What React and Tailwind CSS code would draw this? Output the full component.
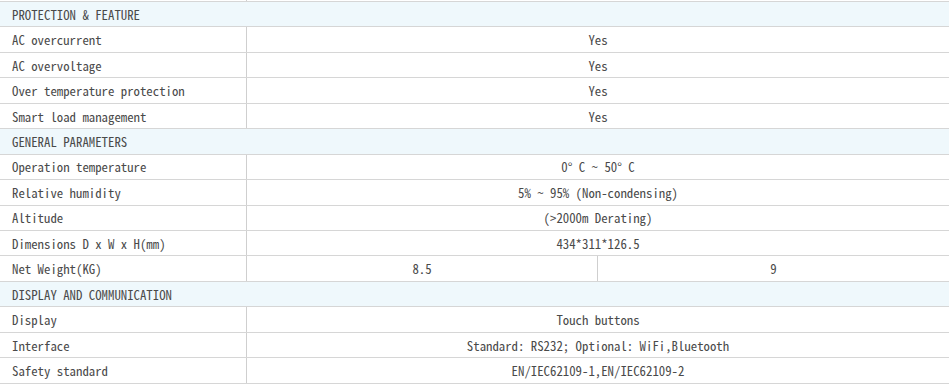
import React from "react";

const sections = [
  {
    title: "PROTECTION & FEATURE",
    rows: [
      ["AC overcurrent", "Yes"],
      ["AC overvoltage", "Yes"],
      ["Over temperature protection", "Yes"],
      ["Smart load management", "Yes"],
    ],
  },
  {
    title: "GENERAL PARAMETERS",
    rows: [
      ["Operation temperature", "0° C ~ 50° C"],
      ["Relative humidity", "5% ~ 95% (Non-condensing)"],
      ["Altitude", "(>2000m Derating)"],
      ["Dimensions D x W x H(mm)", "434*311*126.5"],
      ["Net Weight(KG)", ["8.5", "9"]],
    ],
  },
  {
    title: "DISPLAY AND COMMUNICATION",
    rows: [
      ["Display", "Touch buttons"],
      ["Interface", "Standard: RS232; Optional: WiFi,Bluetooth"],
      ["Safety standard", "EN/IEC62109-1,EN/IEC62109-2"],
    ],
  },
];

export default function App() {
  return (
    <div
      className="w-[951px] h-[388px] bg-white overflow-hidden text-[12.8px] text-[#4a4a4a] leading-none"
      style={{ fontFamily: '"Noto Sans Mono CJK SC", "Liberation Mono", monospace' }}
    >
      <div className="w-[949px]">
        <div className="flex h-[1px]">
          <div className="w-[247px] border-r border-[#cfcfcf]" />
        </div>
        <div className="border-t border-[#d6d6d6]">
          {sections.map((s) => (
            <React.Fragment key={s.title}>
              <div className="flex items-center h-[25.45px] pt-[2px] border-b border-[#d6d6d6] bg-[#eff8fc] pl-[12px]">
                {s.title}
              </div>
              {s.rows.map(([label, value]) => (
                <div key={label} className="flex h-[25.45px] pt-[2px] border-b border-[#d6d6d6]">
                  <div className="w-[247px] shrink-0 flex items-center pl-[12px] border-r border-[#cfcfcf] -mt-[2px] pt-[2px]">
                    {label}
                  </div>
                  {Array.isArray(value) ? (
                    <>
                      <div className="w-[351px] flex items-center justify-center border-r border-[#cfcfcf] -mt-[2px] pt-[2px]">
                        {value[0]}
                      </div>
                      <div className="flex-1 flex items-center justify-center">{value[1]}</div>
                    </>
                  ) : (
                    <div className="flex-1 flex items-center justify-center">{value}</div>
                  )}
                </div>
              ))}
            </React.Fragment>
          ))}
        </div>
      </div>
    </div>
  );
}
